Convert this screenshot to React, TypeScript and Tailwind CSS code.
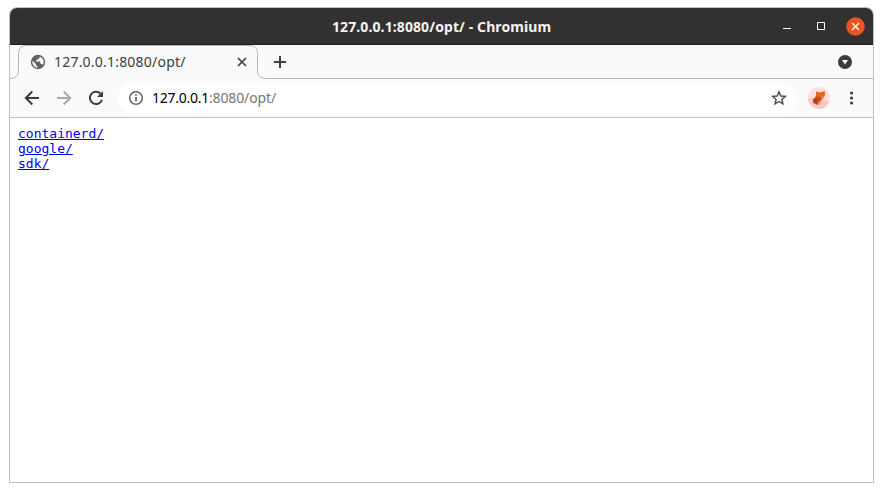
function TabOutline() {
  return (
    <svg className="pointer-events-none absolute left-0 top-0" width="258" height="34" viewBox="0 0 258 34" fill="none">
      <path d="M0 33.5 C5.5 33.5 8.5 30.5 8.5 25.5 V8.5 C8.5 3.5 11.5 .5 16.5 .5 H239.5 C244.5 .5 247.5 3.5 247.5 8.5 V25.5 C247.5 30.5 250.5 33.5 255.5 33.5 H258" stroke="#b4b4b4" />
    </svg>
  );
}

function Globe() {
  return (
    <svg width="16" height="16" viewBox="0 0 16 16">
      <circle cx="8" cy="8" r="7.2" fill="#5f6368" />
      <path d="M9.4 2.5 C10.2 4 9 4.9 7.5 4.8 V6.3 H6 V7.6 H9.1 C10.1 7.6 10.5 8.2 10.5 9 V10 H11.4 C12.2 10 12.7 10.6 12.7 11.2 A5.7 5.7 0 0 0 9.4 2.5 Z M2.4 7.2 C2.1 10.5 4.2 13.4 7.5 13.7 V12.2 C6.5 12.1 5.9 11.4 5.9 10.5 V9.9 L3.2 7.2 Z" fill="#fafafa" />
    </svg>
  );
}

function Avatar() {
  return (
    <svg width="22" height="22" viewBox="0 0 22 22">
      <defs>
        <clipPath id="avatar-disc"><circle cx="11" cy="11" r="11" /></clipPath>
      </defs>
      <g clipPath="url(#avatar-disc)">
        <path d="M0 0H22V22H0Z" fill="#fce0e0" />
        <path d="M0 12L7 10L22 15V22H0Z" fill="#fac9c7" />
        <path d="M8 4.5L11.5 5.5L17 4L16.7 9L13 11L8 9Z" fill="#e9651d" />
        <path d="M12.5 9L16.7 8.5L15 12L12 14Z" fill="#f07b2c" />
        <path d="M8 9L13 10L12.5 15L10 18L5 16L6 12Z" fill="#ce4818" />
        <path d="M5 12L9 12L9 16L5.5 15Z" fill="#a94127" />
        <path d="M10 15L12.5 14L12.8 17L10 18Z" fill="#dba36c" />
      </g>
    </svg>
  );
}

export default function App() {
  return (
    <div className="h-[492px] w-[883px] bg-white pl-[9px] pt-[7px] font-['Noto_Sans',sans-serif] text-[#3c4043]">
      <div className="flex h-[476px] w-[865px] flex-col overflow-hidden rounded-t-[8px] border border-[#c0c0c0] bg-white">
        <header className="grid h-[37px] shrink-0 grid-cols-[1fr_auto_1fr] items-center border-b border-[#1e1d1d] bg-[#323030] pr-[8px]">
          <span />
          <h1 className="mt-px w-[219px] translate-x-[4px] whitespace-nowrap text-[14px] font-bold leading-5 tracking-[0.1px] text-[#f5f5f5]">127.0.0.1:8080/opt/ - Chromium</h1>
          <div className="flex items-center justify-end gap-[20px] text-white">
            <svg width="10" height="10" viewBox="0 0 10 10"><path d="M1 7.5H9" stroke="currentColor" /></svg>
            <svg className="ml-[4px]" width="10" height="10" viewBox="0 0 10 10" fill="none"><path d="M1.5 1.5H8.5V8.5H1.5Z" stroke="currentColor" /></svg>
            <svg width="19" height="19" viewBox="0 0 19 19"><circle cx="9.5" cy="9.5" r="9.3" fill="#e95420" /><path d="M6 6L13 13M13 6L6 13" stroke="currentColor" strokeWidth="1.3" /></svg>
          </div>
        </header>

        <div className="relative flex h-[34px] shrink-0 bg-[#fafafa]">
          <div className="flex w-[258px] items-center pl-[20px]">
            <TabOutline />
            <Globe />
            <span className="ml-[8px] w-[179px] whitespace-nowrap text-[14px] leading-5 tracking-[0.21px]">127.0.0.1:8080/opt/</span>
            <svg width="18" height="18" viewBox="0 0 18 18"><path d="M5 5L13 13M13 5L5 13" stroke="#3c4043" strokeWidth="1.7" /></svg>
          </div>
          <div className="flex grow items-center justify-between border-b border-[#b4b4b4] pl-[6px] pr-[21px]">
            <svg width="12" height="12" viewBox="0 0 12 12"><path d="M6 0V12M0 6H12" stroke="#3c4043" strokeWidth="2" /></svg>
            <svg width="14" height="14" viewBox="0 0 14 14"><circle cx="7" cy="7" r="7" fill="#3c3c3c" /><path d="M4 5H10L7 9.5Z" fill="#fafafa" /></svg>
          </div>
        </div>

        <div className="flex h-[39px] shrink-0 items-center border-b border-[#c0c0c0] bg-[#fafafa] pl-[14px]">
          <div className="flex gap-[16px] text-[#3c3c3c]">
            <svg width="16" height="16" viewBox="0 0 16 16" fill="none" stroke="currentColor" strokeWidth="2"><path d="M15 8H2M8.3 1.5L1.8 8L8.3 14.5" /></svg>
            <svg className="text-[#aaaaaa]" width="16" height="16" viewBox="0 0 16 16" fill="none" stroke="currentColor" strokeWidth="2"><path d="M1 8H14M7.7 1.5L14.2 8L7.7 14.5" /></svg>
            <svg width="16" height="16" viewBox="0 0 16 16" fill="none"><path d="M12.5 3.5A6.2 6.2 0 1 0 14 9.8" stroke="currentColor" strokeWidth="2" /><path d="M15 1V7H9Z" fill="currentColor" /></svg>
          </div>
          <div className="ml-[14px] flex h-[30px] w-[679px] items-center rounded-full bg-white pl-[10px] pr-[10px]">
            <svg width="16" height="16" viewBox="0 0 16 16" fill="none" stroke="#5f6368"><circle cx="8" cy="8" r="6.3" strokeWidth="1.5" /><path d="M8 7V11.5M8 4.3V5.8" strokeWidth="1.7" /></svg>
            <span className="ml-[8px] grow whitespace-nowrap text-[14px] leading-5 tracking-[-0.12px] text-[#777]"><span className="tracking-[-0.27px] text-black">127.0.0.1</span>:8080/opt/</span>
            <svg width="16" height="16" viewBox="0 0 16 16" fill="none"><path d="M8 1.8L9.8 6L14.3 6.4L10.9 9.4L11.9 13.8L8 11.5L4.1 13.8L5.1 9.4L1.7 6.4L6.2 6Z" stroke="#44474b" strokeWidth="1.4" /></svg>
          </div>
          <div className="ml-[11px] flex items-center gap-[20px]">
            <Avatar />
            <svg width="4" height="16" viewBox="0 0 4 16" fill="#3c3c3c"><circle cx="1.6" cy="3" r="1.6" /><circle cx="1.6" cy="8" r="1.6" /><circle cx="1.6" cy="13" r="1.6" /></svg>
          </div>
        </div>

        <main className="flex grow flex-col items-start px-[8px] pt-[8px] font-['DejaVu_Sans_Mono',monospace] text-[13px] leading-[15px] text-[#0000ee]">
          <a href="#containerd" className="underline">containerd/</a>
          <a href="#google" className="underline">google/</a>
          <a href="#sdk" className="underline">sdk/</a>
        </main>
      </div>
    </div>
  );
}
